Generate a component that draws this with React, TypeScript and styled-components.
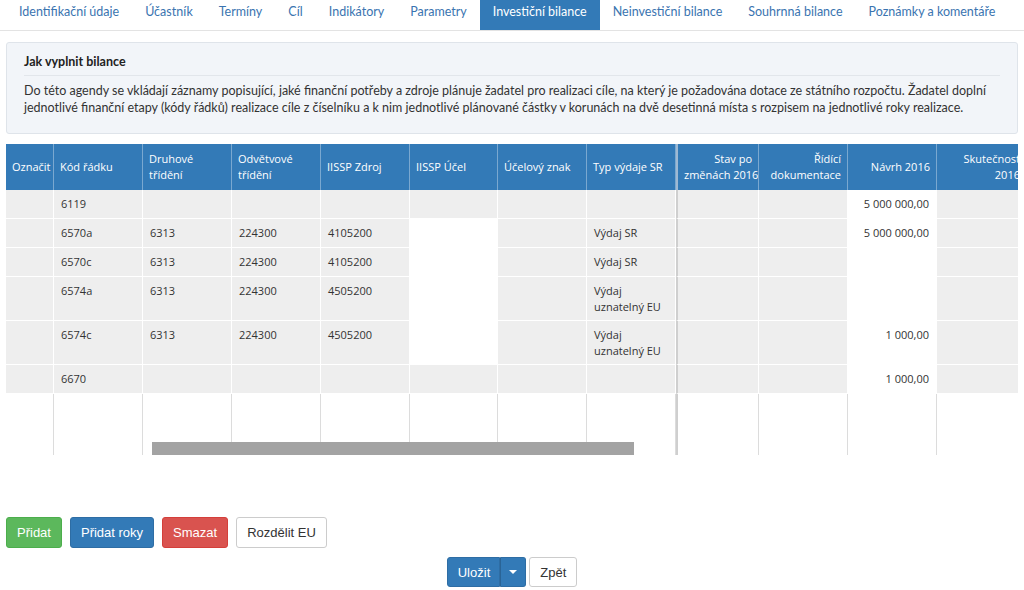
import React from "react";
import styled, { createGlobalStyle } from "styled-components";

const GlobalStyle = createGlobalStyle`
  body {
    margin: 0;
    background: #fff;
    font-family: "Lato", "Open Sans", sans-serif;
    color: #333;
  }
`;

const Page = styled.div`
  width: 1024px;
  padding: 0 6px;
  box-sizing: border-box;
`;

const Tabs = styled.ul`
  display: flex;
  list-style: none;
  margin: 0 -6px;
  padding: 0 0 0 6px;
  height: 30px;
  border-bottom: 1px solid #e3e3e3;
`;

const Tab = styled.li<{ active?: boolean }>`
  padding: 0 13px;
  height: 30px;
  line-height: 24px;
  font-size: 12.5px;
  white-space: nowrap;
  color: ${({ active }) => (active ? "#fff" : "#3a74b0")};
  background: ${({ active }) => (active ? "#337ab7" : "transparent")};
`;

const InfoBox = styled.div`
  margin-top: 11px;
  height: 92px;
  box-sizing: border-box;
  padding: 11px 17px 0;
  background: #f2f5f9;
  border: 1px solid #dfe4ea;
  border-radius: 3px;
`;

const InfoTitle = styled.div`
  font-weight: 700;
  font-size: 12.5px;
  color: #222;
  padding-bottom: 6px;
  border-bottom: 1px solid #e2e6eb;
`;

const InfoText = styled.p`
  margin: 6px 0 0;
  font-size: 12.5px;
  line-height: 17px;
  color: #333;
  white-space: nowrap;
`;

const GridWrap = styled.div`
  position: relative;
  margin-top: 10px;
  width: 1012px;
  overflow: hidden;
`;

const Grid = styled.table`
  border-collapse: separate;
  border-spacing: 0;
  table-layout: fixed;
  font-family: "Open Sans", sans-serif;
  font-size: 11px;
  color: #333;
`;

const HeadCell = styled.th<{ right?: boolean; center?: boolean; divider?: boolean }>`
  background: #337ab7;
  color: #fff;
  font-weight: 400;
  height: 46px;
  box-sizing: border-box;
  padding: 0 6px;
  line-height: 16px;
  white-space: nowrap;
  overflow: hidden;
  vertical-align: middle;
  text-align: ${({ right, center }) => (right ? "right" : center ? "center" : "left")};
  border-right: 1px solid rgba(255, 255, 255, 0.35);
  border-left: ${({ divider }) => (divider ? "2px solid #9fb9d3" : "none")};
`;

const Cell = styled.td<{ right?: boolean; white?: boolean; divider?: boolean; tall?: boolean }>`
  background: ${({ white }) => (white ? "#fff" : "#eeeeee")};
  height: ${({ tall }) => (tall ? "44px" : "29px")};
  box-sizing: border-box;
  padding: 6px 7px 0;
  line-height: 16px;
  vertical-align: top;
  white-space: nowrap;
  overflow: hidden;
  text-align: ${({ right }) => (right ? "right" : "left")};
  border-right: 1px solid #fff;
  border-bottom: 1px solid #fff;
  border-left: ${({ divider }) => (divider ? "2px solid #cfcfcf" : "none")};
`;

const FillerCell = styled.td<{ divider?: boolean }>`
  height: 61px;
  box-sizing: border-box;
  padding: 0;
  background: #fff;
  border-right: 1px solid #dcdcdc;
  border-left: ${({ divider }) => (divider ? "2px solid #cfcfcf" : "none")};
`;

const ScrollThumb = styled.div`
  position: absolute;
  left: 146px;
  bottom: 0;
  width: 482px;
  height: 13px;
  background: #a3a3a3;
`;

const ActionRow = styled.div`
  display: flex;
  gap: 8px;
  margin-top: 62px;
`;

const Btn = styled.button<{ variant: "success" | "primary" | "danger" | "default" }>`
  height: 31px;
  padding: 0 10px;
  font-family: "Liberation Sans", Arial, sans-serif;
  font-size: 13px;
  border-radius: 3px;
  cursor: pointer;
  color: ${({ variant }) => (variant === "default" ? "#333" : "#fff")};
  background: ${({ variant }) =>
    variant === "success"
      ? "#5cb85c"
      : variant === "primary"
      ? "#337ab7"
      : variant === "danger"
      ? "#d9534f"
      : "#fff"};
  border: 1px solid
    ${({ variant }) =>
      variant === "success"
        ? "#4cae4c"
        : variant === "primary"
        ? "#2e6da4"
        : variant === "danger"
        ? "#d43f3a"
        : "#ccc"};
`;

const SaveRow = styled.div`
  display: flex;
  justify-content: center;
  gap: 3px;
  margin-top: 9px;
`;

const SplitGroup = styled.div`
  display: flex;
`;

const SaveBtn = styled(Btn)`
  height: 30px;
  padding: 0 9px 0 10px;
  border-radius: 3px 0 0 3px;
`;

const CaretBtn = styled(Btn)`
  height: 30px;
  width: 26px;
  padding: 0;
  border-left: 1px solid #2a6496;
  border-radius: 0 3px 3px 0;
  display: flex;
  align-items: center;
  justify-content: center;
`;

const Caret = styled.span`
  width: 0;
  height: 0;
  border-left: 4px solid transparent;
  border-right: 4px solid transparent;
  border-top: 4px solid #fff;
`;

const BackBtn = styled(Btn)`
  height: 30px;
`;

const tabs = [
  "Identifikační údaje",
  "Účastník",
  "Termíny",
  "Cíl",
  "Indikátory",
  "Parametry",
  "Investiční bilance",
  "Neinvestiční bilance",
  "Souhrnná bilance",
  "Poznámky a komentáře",
];

type Col = { key: string; title: React.ReactNode; width: number; right?: boolean; center?: boolean };

const cols: Col[] = [
  { key: "oz", title: "Označit", width: 48, center: true },
  { key: "kod", title: "Kód řádku", width: 89 },
  { key: "druh", title: <>Druhové<br />třídění</>, width: 89 },
  { key: "odv", title: <>Odvětvové<br />třídění</>, width: 89 },
  { key: "zdroj", title: "IISSP Zdroj", width: 89 },
  { key: "ucel", title: "IISSP Účel", width: 88 },
  { key: "znak", title: "Účelový znak", width: 89 },
  { key: "typ", title: "Typ výdaje SR", width: 89 },
  { key: "stav", title: <>Stav po<br />změnách 2016</>, width: 83, right: true },
  { key: "rid", title: <>Řídící<br />dokumentace</>, width: 89, right: true },
  { key: "navrh", title: "Návrh 2016", width: 89, right: true },
  { key: "skut", title: <>Skutečnost<br />2016</>, width: 90, right: true },
];

type Row = {
  cells: Record<string, React.ReactNode>;
  ucelWhite?: boolean;
  tall?: boolean;
};

const euType = <>Výdaj<br />uznatelný EU</>;

const rows: Row[] = [
  { cells: { kod: "6119", navrh: "5 000 000,00" } },
  { cells: { kod: "6570a", druh: "6313", odv: "224300", zdroj: "4105200", typ: "Výdaj SR", navrh: "5 000 000,00" }, ucelWhite: true },
  { cells: { kod: "6570c", druh: "6313", odv: "224300", zdroj: "4105200", typ: "Výdaj SR" }, ucelWhite: true },
  { cells: { kod: "6574a", druh: "6313", odv: "224300", zdroj: "4505200", typ: euType }, ucelWhite: true, tall: true },
  { cells: { kod: "6574c", druh: "6313", odv: "224300", zdroj: "4505200", typ: euType, navrh: "1 000,00" }, ucelWhite: true, tall: true },
  { cells: { kod: "6670", navrh: "1 000,00" } },
];

export default function App() {
  return (
    <Page>
      <GlobalStyle />
      <Tabs>
        {tabs.map((t) => (
          <Tab key={t} active={t === "Investiční bilance"}>
            {t}
          </Tab>
        ))}
      </Tabs>

      <InfoBox>
        <InfoTitle>Jak vyplnit bilance</InfoTitle>
        <InfoText>
          Do této agendy se vkládají záznamy popisující, jaké finanční potřeby a zdroje plánuje žadatel pro realizaci cíle, na který je požadována dotace ze státního rozpočtu. Žadatel doplní
          <br />
          jednotlivé finanční etapy (kódy řádků) realizace cíle z číselníku a k nim jednotlivé plánované částky v korunách na dvě desetinná místa s rozpisem na jednotlivé roky realizace.
        </InfoText>
      </InfoBox>

      <GridWrap>
        <Grid style={{ width: cols.reduce((s, c) => s + c.width, 0) }}>
          <colgroup>
            {cols.map((c) => (
              <col key={c.key} style={{ width: c.width }} />
            ))}
          </colgroup>
          <thead>
            <tr>
              {cols.map((c) => (
                <HeadCell key={c.key} right={c.right} center={c.center} divider={c.key === "stav"}>
                  {c.title}
                </HeadCell>
              ))}
            </tr>
          </thead>
          <tbody>
            {rows.map((r, i) => (
              <tr key={i}>
                {cols.map((c) => (
                  <Cell
                    key={c.key}
                    right={c.right}
                    tall={r.tall}
                    divider={c.key === "stav"}
                    white={c.key === "navrh" || (c.key === "ucel" && !!r.ucelWhite)}
                  >
                    {r.cells[c.key]}
                  </Cell>
                ))}
              </tr>
            ))}
            <tr>
              {cols.map((c) => (
                <FillerCell key={c.key} divider={c.key === "stav"} />
              ))}
            </tr>
          </tbody>
        </Grid>
        <ScrollThumb />
      </GridWrap>

      <ActionRow>
        <Btn variant="success">Přidat</Btn>
        <Btn variant="primary">Přidat roky</Btn>
        <Btn variant="danger">Smazat</Btn>
        <Btn variant="default">Rozdělit EU</Btn>
      </ActionRow>

      <SaveRow>
        <SplitGroup>
          <SaveBtn variant="primary">Uložit</SaveBtn>
          <CaretBtn variant="primary" aria-label="Více">
            <Caret />
          </CaretBtn>
        </SplitGroup>
        <BackBtn variant="default">Zpět</BackBtn>
      </SaveRow>
    </Page>
  );
}
